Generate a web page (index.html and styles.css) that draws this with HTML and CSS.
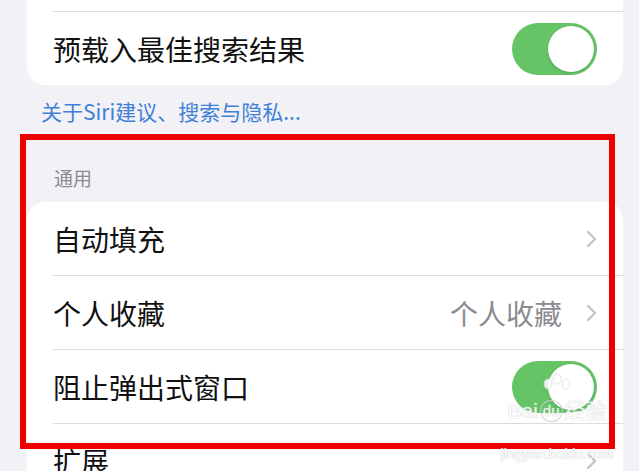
FILE: index.html
```html
<!DOCTYPE html>
<html lang="zh-CN">
<head>
    <meta charset="UTF-8">
    <meta name="viewport" content="width=device-width, initial-scale=1.0">
    <title>Safari 设置</title>
    <link rel="stylesheet" href="styles.css">
</head>
<body>
    <div class="page">
        <div class="group group-top">
            <div class="row"></div>
            <div class="row">
                <span class="label">预载入最佳搜索结果</span>
                <span class="switch on"><span class="knob"></span></span>
            </div>
        </div>

        <a class="footer-link" href="#">关于Siri建议、搜索与隐私...</a>

        <div class="section-title">通用</div>
        <div class="group">
            <div class="row">
                <span class="label">自动填充</span>
                <svg class="chevron" width="11" height="18" viewBox="0 0 11 18"><polyline points="2,2 9,9 2,16" fill="none" stroke="#c5c5c9" stroke-width="2.4" stroke-linecap="round" stroke-linejoin="round"/></svg>
            </div>
            <div class="row">
                <span class="label">个人收藏</span>
                <span class="value">个人收藏</span>
                <svg class="chevron" width="11" height="18" viewBox="0 0 11 18"><polyline points="2,2 9,9 2,16" fill="none" stroke="#c5c5c9" stroke-width="2.4" stroke-linecap="round" stroke-linejoin="round"/></svg>
            </div>
            <div class="row">
                <span class="label">阻止弹出式窗口</span>
                <span class="switch on"><span class="knob"></span></span>
            </div>
            <div class="row">
                <span class="label">扩展</span>
                <svg class="chevron" width="11" height="18" viewBox="0 0 11 18"><polyline points="2,2 9,9 2,16" fill="none" stroke="#c5c5c9" stroke-width="2.4" stroke-linecap="round" stroke-linejoin="round"/></svg>
            </div>
        </div>
    </div>

    <!-- 红框标注 -->
    <div class="annotation"></div>

    <!-- 水印 -->
    <div class="watermark">
        <svg class="paw" width="40" height="24" viewBox="0 0 40 24">
            <ellipse cx="11" cy="12" rx="4" ry="5" fill="#fff" stroke="#dcdce0"/>
            <ellipse cx="20" cy="7" rx="4" ry="5" fill="#fff" stroke="#dcdce0"/>
            <ellipse cx="29" cy="12" rx="4" ry="5" fill="#fff" stroke="#dcdce0"/>
        </svg>
        <div class="wm-main"><span>Bai</span><span class="wm-du">du</span><span>经验</span></div>
        <div class="wm-url">jingyan.baidu.com</div>
    </div>
</body>
</html>
```

FILE: styles.css
```css
body {
    margin: 0;
    padding: 0;
    background-color: #f1f1f6;
    font-family: "Noto Sans CJK SC", "Liberation Sans", sans-serif;
    overflow: hidden;
}
.page {
    width: 639px;
    height: 471px;
    overflow: hidden;
}
.group {
    background: #ffffff;
    border-radius: 18px;
    margin: 0 16px 0 27px;
    overflow: hidden;
}
.group-top {
    margin-top: -62px;
}
.row {
    height: 73px;
    margin-left: 26px;
    padding-right: 26px;
    display: flex;
    align-items: center;
    border-bottom: 1px solid #dcdce0;
}
.row:last-child {
    border-bottom: none;
}
.label {
    flex: 1;
    font-size: 28px;
    color: #111;
}
.value {
    font-size: 28px;
    color: #8b8b90;
    margin-right: 24px;
}
.chevron {
    display: block;
}
.switch {
    width: 85px;
    height: 52px;
    border-radius: 26px;
    background: #65c466;
    display: flex;
    align-items: center;
    justify-content: flex-end;
    padding: 0 3px;
    box-sizing: border-box;
}
.knob {
    width: 46px;
    height: 46px;
    border-radius: 50%;
    background: #fff;
    box-shadow: 0 1px 3px rgba(0, 0, 0, 0.15);
}
.footer-link {
    display: block;
    margin: 12px 0 0 41px;
    font-size: 21px;
    line-height: 28px;
    color: #3f7fd6;
    text-decoration: none;
}
.section-title {
    margin: 40px 0 11px 54px;
    font-size: 19px;
    line-height: 26px;
    color: #8a8a8f;
}
.annotation {
    position: absolute;
    left: 20px;
    top: 134px;
    width: 595px;
    height: 315px;
    border: 6px solid #ec0000;
    box-sizing: border-box;
}
.watermark {
    position: absolute;
    left: 495px;
    top: 372px;
    width: 124px;
    text-align: center;
    white-space: nowrap;
    color: #ffffff;
    font-family: "Liberation Sans", "Noto Sans CJK SC", sans-serif;
    text-shadow: 0 0 1px #c4c4c8, 0 0 1px #c4c4c8;
    opacity: 0.85;
}
.paw {
    display: block;
    margin: 0 auto;
}
.wm-main {
    font-size: 21px;
    line-height: 30px;
    display: flex;
    justify-content: center;
    align-items: center;
    gap: 2px;
}
.wm-du {
    font-size: 15px;
    border: 1px solid #d0d0d4;
    border-radius: 50%;
    padding: 0 2px;
    line-height: 20px;
}
.wm-url {
    margin-top: 20px;
    font-size: 14px;
    line-height: 16px;
}
```
